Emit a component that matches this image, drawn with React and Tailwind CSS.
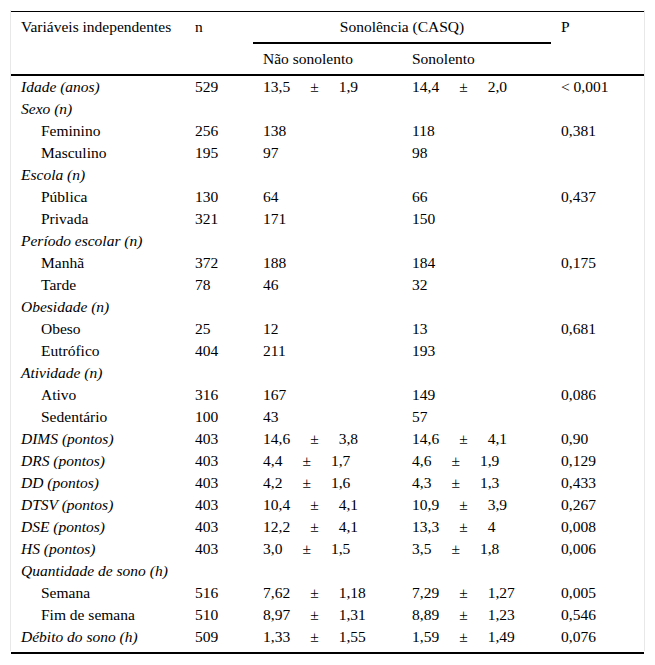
const rows = [
  { label: "Idade (anos)", cat: true, n: "529", a: ["13,5", "1,9"], b: ["14,4", "2,0"], p: "< 0,001" },
  { label: "Sexo (n)", cat: true },
  { label: "Feminino", n: "256", a: "138", b: "118", p: "0,381" },
  { label: "Masculino", n: "195", a: "97", b: "98" },
  { label: "Escola (n)", cat: true },
  { label: "Pública", n: "130", a: "64", b: "66", p: "0,437" },
  { label: "Privada", n: "321", a: "171", b: "150" },
  { label: "Período escolar (n)", cat: true },
  { label: "Manhã", n: "372", a: "188", b: "184", p: "0,175" },
  { label: "Tarde", n: "78", a: "46", b: "32" },
  { label: "Obesidade (n)", cat: true },
  { label: "Obeso", n: "25", a: "12", b: "13", p: "0,681" },
  { label: "Eutrófico", n: "404", a: "211", b: "193" },
  { label: "Atividade (n)", cat: true },
  { label: "Ativo", n: "316", a: "167", b: "149", p: "0,086" },
  { label: "Sedentário", n: "100", a: "43", b: "57" },
  { label: "DIMS (pontos)", cat: true, n: "403", a: ["14,6", "3,8"], b: ["14,6", "4,1"], p: "0,90" },
  { label: "DRS (pontos)", cat: true, n: "403", a: ["4,4", "1,7"], b: ["4,6", "1,9"], p: "0,129" },
  { label: "DD (pontos)", cat: true, n: "403", a: ["4,2", "1,6"], b: ["4,3", "1,3"], p: "0,433" },
  { label: "DTSV (pontos)", cat: true, n: "403", a: ["10,4", "4,1"], b: ["10,9", "3,9"], p: "0,267" },
  { label: "DSE (pontos)", cat: true, n: "403", a: ["12,2", "4,1"], b: ["13,3", "4"], p: "0,008" },
  { label: "HS (pontos)", cat: true, n: "403", a: ["3,0", "1,5"], b: ["3,5", "1,8"], p: "0,006" },
  { label: "Quantidade de sono (h)", cat: true },
  { label: "Semana", n: "516", a: ["7,62", "1,18"], b: ["7,29", "1,27"], p: "0,005" },
  { label: "Fim de semana", n: "510", a: ["8,97", "1,31"], b: ["8,89", "1,23"], p: "0,546" },
  { label: "Débito do sono (h)", cat: true, n: "509", a: ["1,33", "1,55"], b: ["1,59", "1,49"], p: "0,076" },
];

function Stat({ value }) {
  if (!value) return null;
  if (typeof value === "string") return <span>{value}</span>;
  return (
    <div className="flex gap-[20px]">
      <span>{value[0]}</span>
      <span>±</span>
      <span>{value[1]}</span>
    </div>
  );
}

export default function App() {
  return (
    <div className="min-h-screen bg-white text-black [font-family:Liberation_Serif,Times_New_Roman,serif] text-[15.5px]">
      <div className="mx-[10px] mt-[10px] border-x border-[#e8e8e8] pt-px pb-[3px]">
        {/* HEADER */}
        <div className="flex border-t border-black border-b-2">
          <div className="w-[174px] pl-[10px] h-[30px] flex items-center">Variáveis independentes</div>
          <div className="w-[68px] pl-[10px] h-[30px] flex items-center">n</div>
          <div className="w-[298px]">
            <div className="h-[30px] flex items-center justify-center">Sonolência (CASQ)</div>
            <div className="h-[2px] bg-black" />
            <div className="flex h-[30px] items-center">
              <div className="w-[149px] pl-[10px]">Não sonolento</div>
              <div className="w-[149px] pl-[10px]">Sonolento</div>
            </div>
          </div>
          <div className="flex-1 pl-[10px] h-[30px] flex items-center">P</div>
        </div>

        {/* BODY */}
        <div>
          {rows.map((r) => (
            <div key={r.label} className="flex h-[22px] items-center leading-[22px]">
              <div className={r.cat ? "w-[174px] pl-[10px] italic" : "w-[174px] pl-[30px]"}>{r.label}</div>
              <div className="w-[68px] pl-[10px]">{r.n}</div>
              <div className="w-[149px] pl-[10px]"><Stat value={r.a} /></div>
              <div className="w-[149px] pl-[10px]"><Stat value={r.b} /></div>
              <div className="flex-1 pl-[10px]">{r.p}</div>
            </div>
          ))}
        </div>
      </div>
      <div className="mx-[11px] mt-px h-[2px] bg-black" />
    </div>
  );
}
